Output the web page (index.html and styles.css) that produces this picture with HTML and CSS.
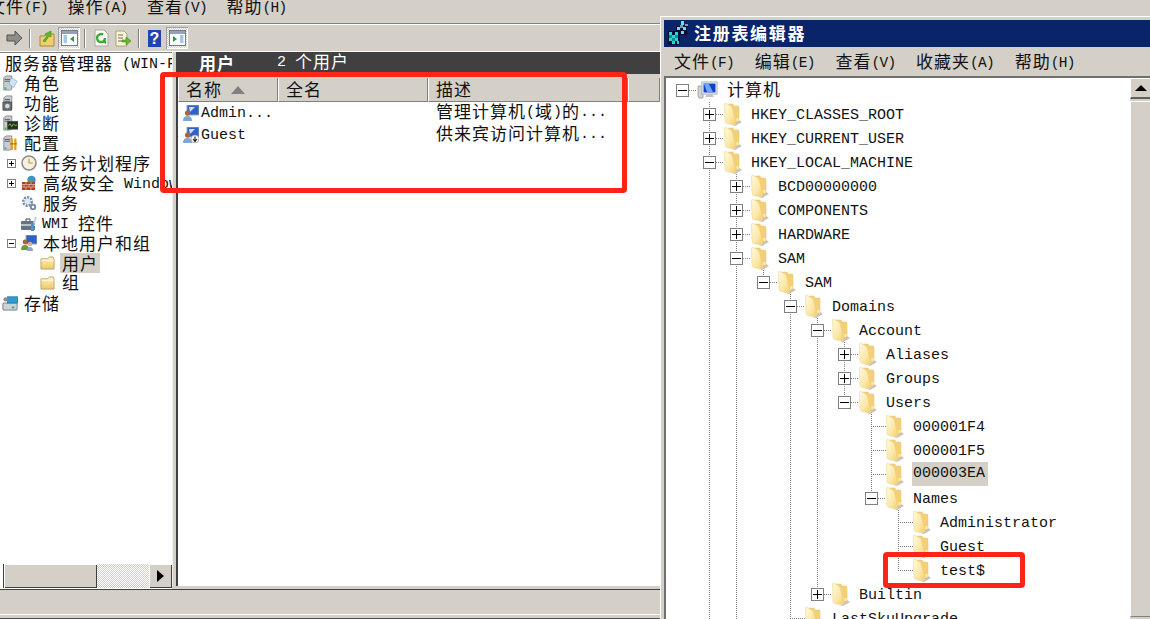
FILE: index.html
```html
<!DOCTYPE html>
<html>
<head>
    <title>服务器管理器</title>
    <link rel="stylesheet" href="styles.css">
</head>
<body>
    <svg class="defs" width="0" height="0">
        <defs>
            <linearGradient id="leaf" x1="0" y1="0" x2="1" y2="1">
                <stop offset="0" stop-color="#fffbe0"/>
                <stop offset=".6" stop-color="#fbe7a6"/>
                <stop offset="1" stop-color="#f2cd70"/>
            </linearGradient>
            <linearGradient id="tan" x1="0" y1="0" x2="0" y2="1">
                <stop offset="0" stop-color="#fff3c4"/>
                <stop offset="1" stop-color="#f0c868"/>
            </linearGradient>
            <symbol id="folder" viewBox="0 0 18 23">
                <path d="M8 22 L15 17 L18 19 L11 23 Z" fill="#c4c4c4"/>
                <path d="M4 1 H9 L10 3 H14 Q15 3 15 5 V18 L10 21 Z" fill="#f4cf78" stroke="#e6c16c" stroke-width=".5"/>
                <path d="M.5 1 Q.5 0 2 .5 L6 2.500 Q8 3.500 8.500 6 L11.500 20 Q11.500 22.500 9.500 22 L3 20.500 Q1 20 1 18 Z" fill="url(#leaf)" stroke="#ecd592" stroke-width=".6"/>
                <rect x="12.500" y="15" width="2" height="3" fill="#fbeeb4"/>
            </symbol>
            <symbol id="small-folder" viewBox="0 0 16 15">
                <path d="M1 3 H8 L10 1 H14 L15 3 V14 H1 Z" fill="url(#tan)" stroke="#b9a46e"/>
                <path d="M1.500 4.500 H14.500" stroke="#fffbe6"/>
            </symbol>
            <symbol id="server" viewBox="0 0 18 18">
                <path d="M2 3 L5 1 H11 V16 L9 17 H2 Z" fill="#c9cdd0" stroke="#6c7278" stroke-width=".8"/>
                <path d="M3 5 H9 M3 7 H9" stroke="#4d5358"/>
                <rect x="3" y="14" width="2" height="2" fill="#2fb84a"/>
            </symbol>
        </defs>
    </svg>

    <div class="desk">
        <div class="mmc">
            <div class="menubar mmc-menu">
                <span><span class="zh">文件</span>(F)</span>
                <span><span class="zh">操作</span>(A)</span>
                <span><span class="zh">查看</span>(V)</span>
                <span><span class="zh">帮助</span>(H)</span>
            </div>
            <div class="toolbar">
                <svg class="tool arrow" width="17" height="16" viewBox="0 0 17 16"><path d="M1 5 H9 V1 L16 8 L9 15 V11 H1 Z" fill="#8c8c88" stroke="#55554f"/></svg>
                <i class="sep sep-a"></i>
                <svg class="tool up" width="16" height="17" viewBox="0 0 16 17"><path d="M1 6 H6 L7 4 H15 V16 H1 Z" fill="#f2cf6d" stroke="#a8893a"/><path d="M4 11 L8 6 L6 4 L12 1 L12 7 L10 6 L6 12 Z" fill="#63b72e" stroke="#3d8a1a" stroke-width=".6"/></svg>
                <span class="toggled">
                    <svg width="17" height="16" viewBox="0 0 17 16"><rect x=".5" y=".5" width="16" height="15" fill="#fff" stroke="#6f7f90"/><rect x="1" y="1" width="15" height="3" fill="#8fa3b8"/><path d="M2.500 6 H6 M2.500 8 H6 M2.500 10 H6 M2.500 12 H6" stroke="#4f8fc9" stroke-width="1.2"/><path d="M13 6 L9 9 L13 12 Z" fill="#2f9a3c"/></svg>
                </span>
                <i class="sep sep-b"></i>
                <svg class="tool refresh" width="15" height="18" viewBox="0 0 15 18"><path d="M1 1 H10 L14 5 V17 H1 Z" fill="#fbfbf6" stroke="#a9a9a0"/><path d="M11 9 A4 4 0 1 1 9 5.600" fill="none" stroke="#3aa83a" stroke-width="2.4"/><path d="M8 13 L12 15 L12 11 Z" fill="#3aa83a"/></svg>
                <svg class="tool export" width="17" height="17" viewBox="0 0 17 17"><path d="M1 1 H9 L12 4 V16 H1 Z" fill="#fcf6d8" stroke="#a9a27f"/><path d="M3 5 H8 M3 8 H8 M3 11 H7" stroke="#6b6b60"/><path d="M7 10 H11 V7 L16 11 L11 15 V12 H7 Z" fill="#63b72e" stroke="#3d8a1a" stroke-width=".6"/></svg>
                <i class="sep sep-c"></i>
                <span class="help">?</span>
                <span class="toggled last">
                    <svg width="17" height="16" viewBox="0 0 17 16"><rect x=".5" y=".5" width="16" height="15" fill="#fff" stroke="#6f7f90"/><rect x="1" y="1" width="15" height="3" fill="#8fa3b8"/><path d="M11 6 H14.500 M11 8 H14.500 M11 10 H14.500 M11 12 H14.500" stroke="#4f8fc9" stroke-width="1.2"/><path d="M4 6 L8 9 L4 12 Z" fill="#2f9a3c"/></svg>
                </span>
            </div>

            <div class="panes">
                <div class="scope">
                    <div class="scope-tree">
                        <div class="item"><span class="txt"><span class="zh">服务器管理器</span> (WIN-F</span></div>
                        <div class="item top">
                            <svg class="ico" viewBox="0 0 18 18"><use href="#server"/><path d="M10 3 L17 7 L13 14 L8 10 Z" fill="#cfe3f5" stroke="#7da3c7" stroke-width=".7"/></svg>
                            <span class="zh">角色</span>
                        </div>
                        <div class="item top">
                            <svg class="ico" viewBox="0 0 18 18"><use href="#server"/><rect x="1" y="8" width="10" height="9" fill="#6b7075" stroke="#33373a" stroke-width=".7"/><circle cx="6" cy="12.500" r="2.600" fill="#d7dadd"/></svg>
                            <span class="zh">功能</span>
                        </div>
                        <div class="item top">
                            <svg class="ico" viewBox="0 0 18 18"><use href="#server"/><rect x="6" y="7" width="12" height="9" fill="#26301f" stroke="#555"  stroke-width=".7"/><path d="M7 12 L9 10 L11 13 L13 10 L15 12 L17 11" fill="none" stroke="#8fd14a"/></svg>
                            <span class="zh">诊断</span>
                        </div>
                        <div class="item top">
                            <svg class="ico" viewBox="0 0 18 18"><use href="#server"/><path d="M11 4 V17 M15 4 V17" stroke="#e2a21c" stroke-width="2.600"/><path d="M9 10 H17" stroke="#8a5a10"/></svg>
                            <span class="zh">配置</span>
                        </div>
                        <div class="item sub">
                            <span class="mini plus"></span>
                            <svg class="ico" viewBox="0 0 16 16"><circle cx="8" cy="8" r="7" fill="#f5f1e2" stroke="#8d8d84" stroke-width="1.600"/><path d="M8 3.500 V8 H12" fill="none" stroke="#c79a3a" stroke-width="1.200"/></svg>
                            <span class="zh">任务计划程序</span>
                        </div>
                        <div class="item sub">
                            <span class="mini plus"></span>
                            <svg class="ico" viewBox="0 0 16 16"><circle cx="10.500" cy="5" r="4.200" fill="#3d8fd6"/><path d="M8 3 L11 6 L9 8 Z" fill="#55b24a"/><rect x="1" y="7" width="13" height="8" fill="#a7432a"/><path d="M1 9.500 H14 M1 12 H14 M5 7 V9.500 M10 7 V9.500 M3 9.500 V12 M8 9.500 V12 M12 9.500 V12 M5 12 V15 M10 12 V15" stroke="#e8c6b4" stroke-width=".7"/></svg>
                            <span class="txt"><span class="zh">高级安全</span> Window</span>
                        </div>
                        <div class="item leaf">
                            <svg class="ico" viewBox="0 0 16 16"><circle cx="6.500" cy="6.500" r="4" fill="none" stroke="#6d8fb0" stroke-width="3" stroke-dasharray="2 1"/><circle cx="6.500" cy="6.500" r="3" fill="#dfe8f1"/><circle cx="12" cy="12" r="2.200" fill="none" stroke="#7f8f9f" stroke-width="2"/></svg>
                            <span class="zh">服务</span>
                        </div>
                        <div class="item leaf">
                            <svg class="ico" viewBox="0 0 16 16"><rect x="0" y="6" width="14" height="9" rx="1" fill="#66727d"/><rect x="0" y="9" width="14" height="2" fill="#b9c2c9"/><path d="M5 6 V4 H9 V6" fill="none" stroke="#444"/><path d="M11 14 L15 2" stroke="#c9ced2" stroke-width="2"/><rect x="10" y="8" width="3" height="8" fill="#4d93cf"/></svg>
                            <span class="txt wmi">WMI <span class="zh">控件</span></span>
                        </div>
                        <div class="item sub">
                            <span class="mini minus"></span>
                            <svg class="ico" viewBox="0 0 16 16"><rect x="5" y="0" width="11" height="9" fill="#2e62c9" stroke="#9aa3ab"/><circle cx="4" cy="7" r="2.400" fill="#a8663a"/><path d="M0 15 Q0 10 4 10 Q8 10 8 15 Z" fill="#6f9a3a"/><circle cx="9" cy="9" r="2.200" fill="#d9b08a"/><path d="M6 16 Q6 12 9 12 Q12 12 12 16 Z" fill="#8aa7c4"/></svg>
                            <span class="zh">本地用户和组</span>
                        </div>
                        <div class="item deep">
                            <svg class="fold" width="15" height="14"><use href="#small-folder"/></svg>
                            <span class="picked"><span class="zh">用户</span></span>
                        </div>
                        <div class="item deep">
                            <svg class="fold" width="15" height="14"><use href="#small-folder"/></svg>
                            <span class="plain"><span class="zh">组</span></span>
                        </div>
                        <div class="item top">
                            <svg class="ico" viewBox="0 0 18 18"><rect x="1" y="9" width="16" height="8" rx="1" fill="#cdd2d6" stroke="#555a5e" stroke-width=".8"/><rect x="11" y="13" width="3" height="2" fill="#2fb84a"/><rect x="6" y="2" width="12" height="7" fill="#2f9ad0" stroke="#1f6f9a" stroke-width=".7"/><circle cx="4" cy="5" r="2.400" fill="#8a8f93"/></svg>
                            <span class="zh">存储</span>
                        </div>
                    </div>
                    <div class="hscroll">
                        <span class="hthumb"></span>
                        <span class="htrack"></span>
                        <span class="hbtn"><i class="tri-right"></i></span>
                    </div>
                </div>
                <div class="splitter"></div>
                <div class="result">
                    <div class="result-title">
                        <span class="zh strong">用户</span>
                        <span class="count">2 <span class="zh">个用户</span></span>
                    </div>
                    <div class="columns">
                        <div class="col col-name"><span class="zh">名称</span><i class="sort"></i></div>
                        <div class="col col-full"><span class="zh">全名</span></div>
                        <div class="col col-desc"><span class="zh">描述</span></div>
                        <div class="col col-rest"></div>
                    </div>
                    <div class="list">
                        <div class="user">
                            <svg class="user-ico" viewBox="0 0 16 16"><rect x="4" y="0" width="12" height="10" fill="#2e62c9" stroke="#9aa3ab"/><path d="M6 2 H12 L7 7 Z" fill="#cfe0fa"/><circle cx="4.500" cy="8" r="2.600" fill="#a8663a"/><path d="M0 16 Q0 11 4.500 11 Q9 11 9 16 Z" fill="#7fa6d0"/></svg>
                            <span class="user-name">Admin...</span>
                            <span class="user-desc"><span class="zh">管理计算机</span>(<span class="zh">域</span>)<span class="zh">的</span>...</span>
                        </div>
                        <div class="user">
                            <svg class="user-ico" viewBox="0 0 16 16"><rect x="4" y="0" width="12" height="10" fill="#2e62c9" stroke="#9aa3ab"/><path d="M6 2 H12 L7 7 Z" fill="#cfe0fa"/><circle cx="4.500" cy="8" r="2.600" fill="#a8663a"/><path d="M0 16 Q0 11 4.500 11 Q9 11 9 16 Z" fill="#7fa6d0"/><circle cx="12" cy="12" r="4" fill="#fff" stroke="#888" stroke-width=".6"/><path d="M12 9.500 V14 M10 12 L12 14.500 L14 12" fill="none" stroke="#222" stroke-width="1.200"/></svg>
                            <span class="user-name">Guest</span>
                            <span class="user-desc"><span class="zh">供来宾访问计算机</span>...</span>
                        </div>
                    </div>
                </div>
            </div>
            <div class="status"></div>
        </div>

        <div class="reg">
            <div class="titlebar">
                <svg class="reg-ico" width="22" height="25" viewBox="0 0 22 25">
                    <path d="M1 10 H13 V24 H1 Z M9 5 H20 V14 H13 V10 H9 Z" fill="#03102e"/>
                    <path d="M2 11 H5 V14 H2 Z M8 11 H11 V14 H8 Z M5 14 H8 V17 H5 Z M2 17 H5 V20 H2 Z M8 17 H11 V20 H8 Z M5 20 H8 V23 H5 Z M10 20 H12 V23 H10 Z" fill="#20d8d8"/>
                    <path d="M2 14 H5 V17 H2 Z M8 14 H11 V17 H8 Z M5 17 H8 V20 H5 Z" fill="#0b8f96"/>
                    <path d="M14 0 H17 V4 H14 Z M10 6 H13 V9 H10 Z M16 6 H19 V9 H16 Z M14 10 H17 V13 H14 Z" fill="#58e6e6"/>
                    <path d="M13 4 H16 V7 H13 Z M18 3 H21 V5 H18 Z" fill="#8a97a8"/>
                </svg>
                <span class="reg-title">注册表编辑器</span>
            </div>
            <div class="menubar reg-menu">
                <span><span class="zh">文件</span>(F)</span>
                <span><span class="zh">编辑</span>(E)</span>
                <span><span class="zh">查看</span>(V)</span>
                <span><span class="zh">收藏夹</span>(A)</span>
                <span><span class="zh">帮助</span>(H)</span>
            </div>
            <div class="treebox">
                <div class="tree">
                    <svg class="guides" width="464" height="541">
                        <path d="M43.500 24V541 M70.500 90V541 M97.500 186V204 M124.500 216V540 M151.500 240V516 M178.500 264V324 M205.500 336V420 M232.500 432V492"/>
                    </svg>
                    <div class="node lv0"><span class="tog minus"></span><i class="dots"></i>
                        <svg class="pc" width="21" height="19" viewBox="0 0 21 19"><path d="M1 5 H6 V17 H2 L1 15 Z" fill="#cfd3d6" stroke="#8b9094" stroke-width=".7"/><rect x="5" y="1" width="15" height="12" fill="#fff" stroke="#a4abb1"/><path d="M6.500 2.500 H18.500 V11.500 H6.500 Z" fill="#0f3fd0"/><path d="M7 3 H12 L16 11 H10 Z" fill="#6fa3f5"/><path d="M10 13 H15 L17 16 H8 Z" fill="#bfc5ca"/></svg>
                        <span class="label zh root">计算机</span></div>
                    <div class="node lv1"><span class="tog plus"></span><i class="dots"></i><svg class="folder"><use href="#folder"/></svg><span class="label">HKEY_CLASSES_ROOT</span></div>
                    <div class="node lv1"><span class="tog plus"></span><i class="dots"></i><svg class="folder"><use href="#folder"/></svg><span class="label">HKEY_CURRENT_USER</span></div>
                    <div class="node lv1"><span class="tog minus"></span><i class="dots"></i><svg class="folder"><use href="#folder"/></svg><span class="label">HKEY_LOCAL_MACHINE</span></div>
                    <div class="node lv2"><span class="tog plus"></span><i class="dots"></i><svg class="folder"><use href="#folder"/></svg><span class="label">BCD00000000</span></div>
                    <div class="node lv2"><span class="tog plus"></span><i class="dots"></i><svg class="folder"><use href="#folder"/></svg><span class="label">COMPONENTS</span></div>
                    <div class="node lv2"><span class="tog plus"></span><i class="dots"></i><svg class="folder"><use href="#folder"/></svg><span class="label">HARDWARE</span></div>
                    <div class="node lv2"><span class="tog minus"></span><i class="dots"></i><svg class="folder"><use href="#folder"/></svg><span class="label">SAM</span></div>
                    <div class="node lv3"><span class="tog minus"></span><i class="dots"></i><svg class="folder"><use href="#folder"/></svg><span class="label">SAM</span></div>
                    <div class="node lv4"><span class="tog minus"></span><i class="dots"></i><svg class="folder"><use href="#folder"/></svg><span class="label">Domains</span></div>
                    <div class="node lv5"><span class="tog minus"></span><i class="dots"></i><svg class="folder"><use href="#folder"/></svg><span class="label">Account</span></div>
                    <div class="node lv6"><span class="tog plus"></span><i class="dots"></i><svg class="folder"><use href="#folder"/></svg><span class="label">Aliases</span></div>
                    <div class="node lv6"><span class="tog plus"></span><i class="dots"></i><svg class="folder"><use href="#folder"/></svg><span class="label">Groups</span></div>
                    <div class="node lv6"><span class="tog minus"></span><i class="dots"></i><svg class="folder"><use href="#folder"/></svg><span class="label">Users</span></div>
                    <div class="node lv7"><i class="dots end"></i><svg class="folder"><use href="#folder"/></svg><span class="label">000001F4</span></div>
                    <div class="node lv7"><i class="dots end"></i><svg class="folder"><use href="#folder"/></svg><span class="label">000001F5</span></div>
                    <div class="node lv7"><i class="dots end"></i><svg class="folder"><use href="#folder"/></svg><span class="label picked-key">000003EA</span></div>
                    <div class="node lv7"><span class="tog minus"></span><i class="dots"></i><svg class="folder"><use href="#folder"/></svg><span class="label">Names</span></div>
                    <div class="node lv8"><i class="dots end"></i><svg class="folder"><use href="#folder"/></svg><span class="label">Administrator</span></div>
                    <div class="node lv8"><i class="dots end"></i><svg class="folder"><use href="#folder"/></svg><span class="label">Guest</span></div>
                    <div class="node lv8"><i class="dots end"></i><svg class="folder"><use href="#folder"/></svg><span class="label">test$</span></div>
                    <div class="node lv5"><span class="tog plus"></span><i class="dots"></i><svg class="folder"><use href="#folder"/></svg><span class="label">Builtin</span></div>
                    <div class="node lv4"><i class="dots end"></i><svg class="folder"><use href="#folder"/></svg><span class="label">LastSkuUpgrade</span></div>
                </div>
                <div class="vscroll">
                    <span class="vbtn"><i class="tri-up"></i></span>
                    <span class="vthumb"></span>
                </div>
            </div>
        </div>

        <div class="mark mark-list"></div>
        <div class="mark mark-key"></div>
    </div>
</body>
</html>
```

FILE: styles.css
```css
html, body {
    margin: 0;
    height: 100%;
    overflow: hidden;
    background: #d4d0c8;
    font-family: "Liberation Mono", "Noto Sans CJK SC", monospace;
    font-size: 15px;
    color: #111;
}

.defs {
    position: absolute;
}

.zh {
    font-size: 17px;
    line-height: 1;
    letter-spacing: 1px;
    vertical-align: -2px;
}

/* zh spans that sit straight in a flex row */
.item > .zh,
.col > .zh,
.picked > .zh,
.result-title > .zh {
    padding-top: 4px;
}

.desk {
    position: relative;
    display: flex;
    width: 1150px;
    height: 619px;
    overflow: hidden;
}

.mmc {
    display: flex;
    flex-direction: column;
    width: 660px;
    flex: none;
}

.menubar {
    display: flex;
    align-items: center;
    font-size: 14.5px;
    letter-spacing: -.7px;
    white-space: nowrap;
}

.menubar .zh {
    vertical-align: -1px;
}

.mmc-menu {
    height: 24px;
    flex: none;
    gap: 19.500px;
    margin-left: -12px;
    padding-bottom: 6px;
    box-sizing: border-box;
    border-bottom: 1px solid #808080;
}

.mmc-menu, .toolbar {
    background: #d4d0c8;
}

.toolbar {
    display: flex;
    align-items: center;
    height: 28px;
    flex: none;
    box-sizing: border-box;
    border-top: 1px solid #fff;
    border-bottom: 1px solid #fff;
}

.tool {
    flex: none;
}

.arrow { margin-left: 6px; }
.up { margin-left: 8px; }
.refresh { margin-left: 8px; }
.export { margin-left: 6px; }

.sep {
    width: 1px;
    height: 19px;
    flex: none;
    background: #808080;
    border-right: 1px solid #fff;
}

.sep-a { margin-left: 6px; }
.sep-b { margin-left: 4px; }
.sep-c { margin-left: 6px; }

.toggled {
    display: flex;
    align-items: center;
    justify-content: center;
    width: 22px;
    height: 22px;
    margin-left: 3px;
    flex: none;
    background: conic-gradient(#fff 25%, #d4d0c8 0 50%, #fff 0 75%, #d4d0c8 0) 0 0 / 2px 2px;
    box-shadow: inset 1px 1px 0 #a0a0a0, inset -1px -1px 0 #fff;
}

.toggled.last {
    margin-left: 5px;
}

.help {
    width: 13px;
    height: 17px;
    margin-left: 8px;
    flex: none;
    background: #1f45b5;
    color: #fff;
    font-family: "Liberation Sans", sans-serif;
    font-size: 16px;
    font-weight: bold;
    line-height: 17px;
    text-align: center;
}

.panes {
    display: flex;
    flex: 1;
    min-height: 0;
}

.scope {
    display: flex;
    flex-direction: column;
    width: 172px;
    flex: none;
    background: #fff;
    border-top: 1px solid #808080;
    box-sizing: border-box;
}

.scope-tree {
    flex: 1;
    min-height: 0;
    overflow: hidden;
}

.item {
    display: flex;
    align-items: center;
    height: 20px;
    padding-left: 5px;
    white-space: nowrap;
}

.item.top { padding-left: 2px; }
.item.sub { padding-left: 7px; }
.item.leaf { padding-left: 21px; }
.item.deep { padding-left: 40px; }

.ico {
    width: 16px;
    height: 16px;
    margin-right: 6px;
    flex: none;
}

.item.top .ico {
    width: 16px;
    height: 18px;
}

.txt {
    flex: none;
    padding-top: 3px;
}

.mini {
    position: relative;
    width: 9px;
    height: 9px;
    margin-right: 5px;
    flex: none;
    background: #fff;
    border: 1px solid #808080;
    box-sizing: border-box;
}

.mini::before {
    content: "";
    position: absolute;
    left: 1px;
    right: 1px;
    top: 3px;
    height: 1px;
    background: #000;
}

.mini.plus::after {
    content: "";
    position: absolute;
    top: 1px;
    bottom: 1px;
    left: 3px;
    width: 1px;
    background: #000;
}

.wmi {
    margin-left: -1px;
}

.fold {
    margin-right: 5px;
    flex: none;
}

.picked {
    display: flex;
    align-items: center;
    height: 20px;
    width: 40px;
    padding-left: 2px;
    box-sizing: border-box;
    background: #d4d0c8;
}

.plain {
    padding-left: 2px;
    padding-top: 2px;
}

.hscroll {
    display: flex;
    height: 24px;
    flex: none;
    margin-bottom: 1px;
}

.hthumb {
    width: 93px;
    margin-left: 3px;
    background: #d4d0c8;
    border-left: 1px solid #404040;
    box-shadow: inset 1px 1px 0 #fff, inset -1px -1px 0 #404040;
}

.htrack {
    flex: 1;
    background: conic-gradient(#fff 25%, #d4d0c8 0 50%, #fff 0 75%, #d4d0c8 0) 0 0 / 2px 2px;
}

.hbtn {
    display: flex;
    align-items: center;
    justify-content: center;
    width: 23px;
    background: #d4d0c8;
    box-shadow: inset 1px 1px 0 #fff, inset -1px -1px 0 #404040;
}

.tri-right {
    width: 0;
    height: 0;
    border-left: 7px solid #000;
    border-top: 6px solid transparent;
    border-bottom: 6px solid transparent;
}

.splitter {
    width: 6px;
    flex: none;
    box-sizing: border-box;
    border-right: 2px solid #404040;
    border-left: 1px solid #eee;
    margin-bottom: 3px;
}

.result {
    display: flex;
    flex-direction: column;
    flex: 1;
    min-width: 0;
    margin-bottom: 3px;
    background: #fff;
}

.result-title {
    display: flex;
    align-items: center;
    height: 22px;
    flex: none;
    padding-left: 21px;
    background: #404040;
    background-clip: padding-box;
    color: #fff;
    white-space: nowrap;
    border-bottom: 4px solid #d4d0c8;
}

.strong {
    font-weight: bold;
}

.count {
    margin-left: 42px;
}

.columns {
    display: flex;
    height: 24px;
    flex: none;
    background: #d4d0c8;
}

.col {
    display: flex;
    align-items: center;
    padding-left: 7px;
    box-sizing: border-box;
    border-left: 1px solid #fff;
    border-right: 1px solid #808080;
    border-bottom: 1px solid #808080;
}

.col-name { width: 100px; }
.col-full { width: 150px; }
.col-desc { width: 200px; }
.col-rest { flex: 1; }

.sort {
    width: 0;
    height: 0;
    margin-left: 9px;
    border-left: 7px solid transparent;
    border-right: 7px solid transparent;
    border-bottom: 8px solid #808080;
}

.list {
    flex: 1;
}

.user {
    display: flex;
    align-items: center;
    height: 22px;
    padding-left: 5px;
    white-space: nowrap;
}

.user-ico {
    width: 16px;
    height: 16px;
    margin-right: 2px;
    flex: none;
}

.user-name {
    width: 235px;
    flex: none;
}

.status {
    height: 30px;
    flex: none;
    box-sizing: border-box;
    border-top: 1px solid #404040;
    box-shadow: inset 0 -1px 0 #505050, inset 0 -4px 0 #d4d0c8, inset 0 -5px 0 #fff;
}

.reg {
    display: flex;
    flex-direction: column;
    flex: 1;
    min-width: 0;
    margin-top: 16px;
    padding-left: 3px;
    border-top: 1px solid #fff;
    border-left: 1px solid #fff;
}

.titlebar {
    display: flex;
    align-items: center;
    height: 27px;
    margin-top: 3px;
    flex: none;
    padding-left: 3px;
    background: #0a246a;
    color: #fff;
}

.reg-ico {
    flex: none;
}

.reg-title {
    margin-left: 5px;
    padding-bottom: 2px;
    font-size: 17px;
    font-weight: bold;
    letter-spacing: 1.7px;
}

.reg-menu {
    height: 29px;
    flex: none;
    gap: 20.700px;
    padding-left: 10px;
    padding-top: 4px;
    box-sizing: border-box;
}

.treebox {
    display: flex;
    flex: 1;
    min-height: 0;
    border-top: 2px solid #707070;
    border-left: 2px solid #707070;
}

.tree {
    position: relative;
    flex: 1;
    min-width: 0;
    background: #fff;
    overflow: hidden;
}

.guides {
    position: absolute;
    left: 0;
    top: 0;
    fill: none;
    stroke: #808080;
    stroke-dasharray: 1 1;
}

.node {
    position: relative;
    display: flex;
    align-items: center;
    height: 24px;
    white-space: nowrap;
}

.lv0 { padding-left: 10px; }
.lv1 { padding-left: 37px; }
.lv2 { padding-left: 64px; }
.lv3 { padding-left: 91px; }
.lv4 { padding-left: 118px; }
.lv5 { padding-left: 145px; }
.lv6 { padding-left: 172px; }
.lv7 { padding-left: 199px; }
.lv8 { padding-left: 226px; }

.tog {
    position: relative;
    width: 13px;
    height: 13px;
    flex: none;
    box-sizing: border-box;
    background: #fff;
    border: 1px solid #808080;
}

.tog::before {
    content: "";
    position: absolute;
    left: 1px;
    right: 1px;
    top: 5px;
    height: 1px;
    background: #000;
}

.tog.plus::after {
    content: "";
    position: absolute;
    top: 1px;
    bottom: 1px;
    left: 5px;
    width: 1px;
    background: #000;
}

.dots {
    width: 8px;
    height: 1px;
    flex: none;
    background: repeating-linear-gradient(90deg, #808080 0 1px, transparent 1px 2px);
}

.dots.end {
    width: 15px;
    margin-left: 6px;
}

.folder {
    width: 18px;
    height: 23px;
    flex: none;
}

.pc {
    flex: none;
}

.label {
    margin-left: 9px;
    padding-top: 2px;
}

.picked-key {
    height: 24px;
    line-height: 24px;
    margin-left: 8px;
    padding: 0 3px 0 1px;
    box-sizing: border-box;
    background: #d4d0c8;
}

.vscroll {
    display: flex;
    flex-direction: column;
    width: 20px;
    flex: none;
}

.vbtn {
    display: flex;
    align-items: center;
    justify-content: center;
    height: 21px;
    flex: none;
    border-left: 1px solid #fff;
    border-top: 1px solid #fff;
    border-bottom: 2px solid #606060;
    box-sizing: border-box;
}

.tri-up {
    width: 0;
    height: 0;
    border-left: 6px solid transparent;
    border-right: 6px solid transparent;
    border-bottom: 6px solid #000;
}

.vthumb {
    flex: 1;
    margin-top: 2px;
    margin-bottom: 2px;
    border-left: 1px solid #fff;
    border-top: 1px solid #fff;
    border-bottom: 1px solid #808080;
}

.mark {
    position: absolute;
    box-sizing: border-box;
    border: 5px solid #ff2318;
    border-radius: 4px;
}

.mark-list {
    left: 160px;
    top: 72px;
    width: 467px;
    height: 121px;
}

.mark-key {
    left: 883px;
    top: 552px;
    width: 142px;
    height: 36px;
}
```
